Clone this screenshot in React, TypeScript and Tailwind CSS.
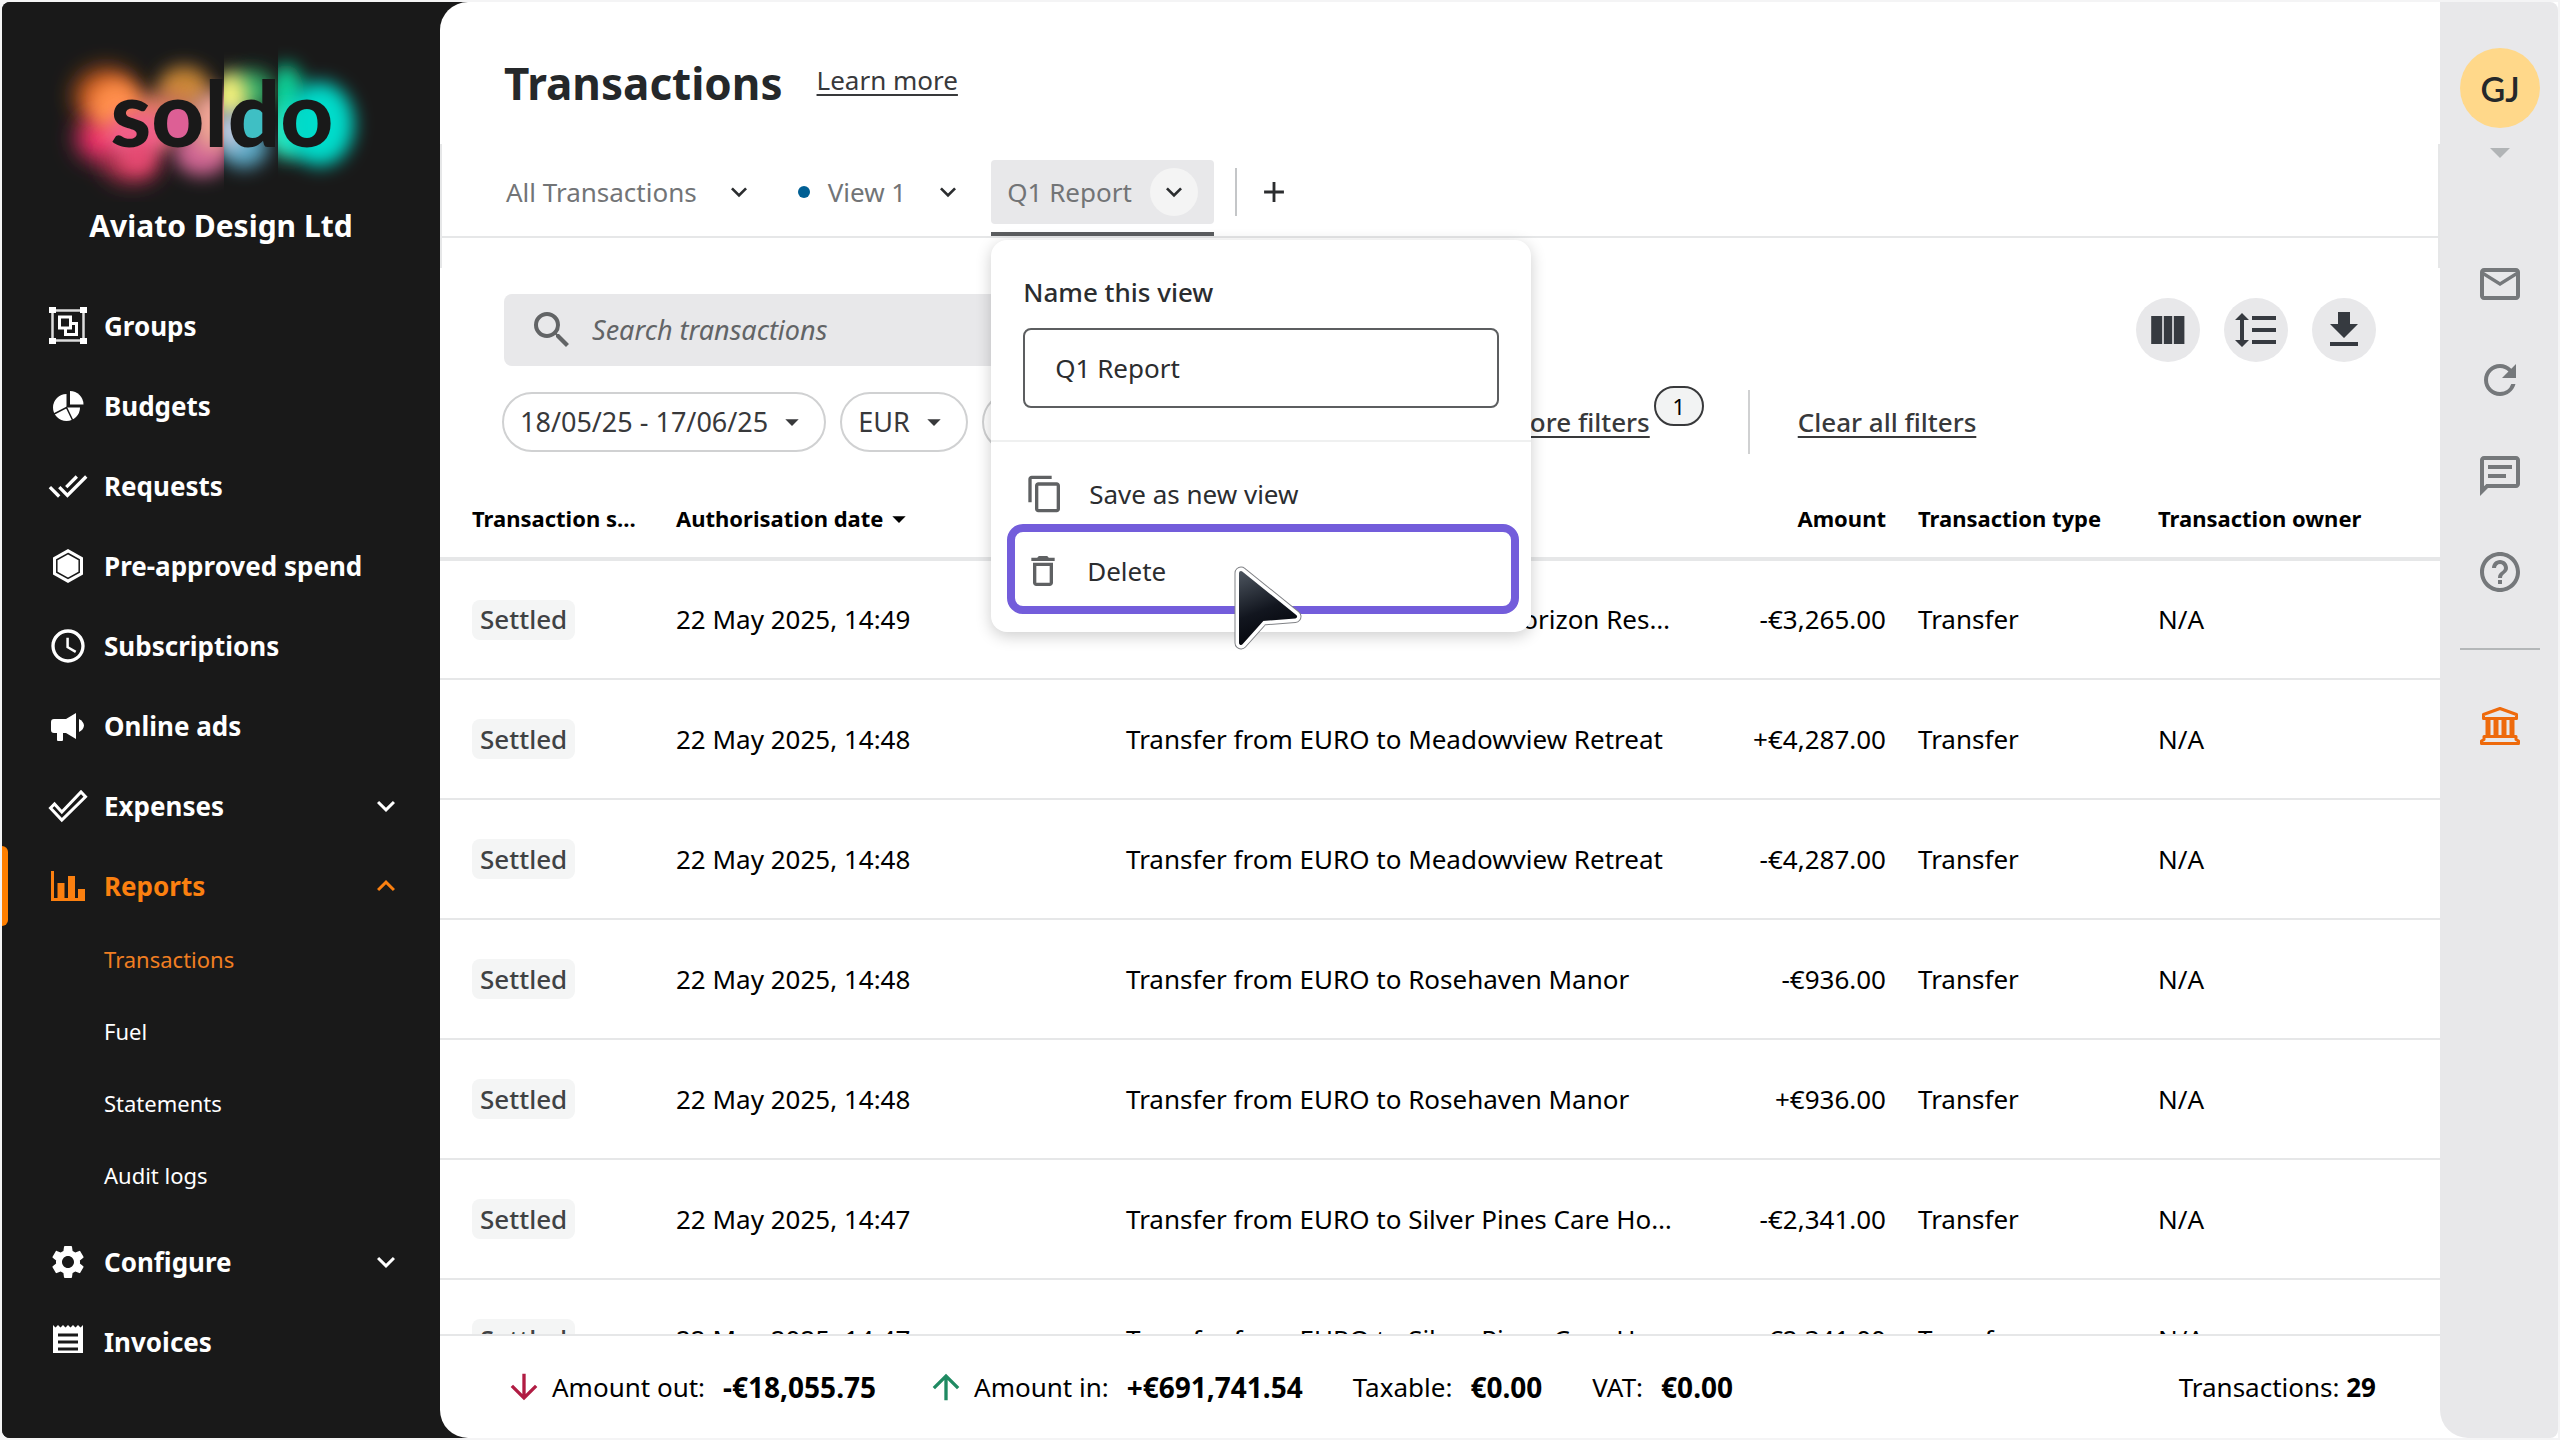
import type { ReactNode } from 'react';
import clsx from 'clsx';
import {
    MdAccessTime,
    MdAdd,
    MdArrowDownward,
    MdArrowDropDown,
    MdArrowUpward,
    MdContentCopy,
    MdDeleteOutline,
    MdDoneAll,
    MdExpandLess,
    MdExpandMore,
    MdHelpOutline,
    MdMailOutline,
    MdRefresh,
    MdSearch,
    MdSettings,
} from 'react-icons/md';

const GroupsIcon = () => (
    <svg viewBox="0 0 40 40" className="size-10" fill="none" stroke="currentColor" strokeWidth="3">
        <rect x="4.5" y="4.5" width="31" height="30" strokeWidth="2.5" opacity="0.85" />
        <path d="M1 1h7v6H1zM32 1h7v6h-7zM1 32h7v6H1zM32 32h7v6h-7z" fill="currentColor" stroke="none" />
        <rect x="11.5" y="11" width="11" height="11" />
        <path d="M22.500 17.500h6v11h-11v-6" />
    </svg>
);

const BudgetsIcon = () => (
    <svg viewBox="0 0 40 40" className="size-10">
        <path d="M18.500 21.500V8A13.500 13.500 0 1 0 32 21.500Z" fill="currentColor" />
        <path d="M22 18.500V5a13.500 13.500 0 0 1 13.500 13.500Z" fill="currentColor" />
        <path d="M5 28.500L18.500 21.500L25 35" fill="none" stroke="#191919" strokeWidth="1.500" />
    </svg>
);

const HexagonIcon = () => (
    <svg viewBox="0 0 40 40" className="size-10">
        <path d="M20 3l15 8.500v17L20 37 5 28.500v-17z" fill="currentColor" />
        <path d="M20 7.500l11.200 6.300v12.400L20 32.500 8.800 26.200V13.800z" fill="none" stroke="#191919" strokeWidth="1.500" />
    </svg>
);

const MegaphoneIcon = () => (
    <svg viewBox="0 0 40 40" className="size-10" fill="currentColor">
        <path d="M6 13h12l10-6v26l-10-6h-3v7a1 1 0 0 1-1 1h-4a1 1 0 0 1-1-1v-7H6a3 3 0 0 1-3-3v-8a3 3 0 0 1 3-3z" />
        <path d="M31 13c3 1.500 5 4 5 6.500s-2 5-5 6.500z" />
    </svg>
);

const CheckOutlineIcon = () => (
    <svg viewBox="0 0 40 40" className="size-10" fill="none" stroke="currentColor" strokeWidth="3">
        <path d="M2.500 22l4-4 7.300 8L33 6l4.500 4.700L13.800 34z" />
    </svg>
);

const ReportsIcon = () => (
    <svg viewBox="0 0 40 40" className="size-10" fill="currentColor">
        <path d="M3 5h3v27h3.500V17h7v15H20V10h7v22h3v-9h7v12H3z" />
    </svg>
);

const InvoiceIcon = () => (
    <svg viewBox="0 0 40 40" className="size-10">
        <path d="M5 3l2.500 2.500L10 3l2.500 2.500L15 3l2.500 2.500L20 3l2.500 2.500L25 3l2.500 2.500L30 3l2.500 2.500L35 3v28H5z" fill="currentColor" />
        <path d="M10 13h20M10 20h20M10 27h20" stroke="#191919" strokeWidth="3" />
    </svg>
);

const BankIcon = () => (
    <svg viewBox="0 0 48 48" className="size-12" fill="none" stroke="currentColor" strokeWidth="3" strokeLinejoin="round">
        <path d="M24 6.500l16.500 6V16.500h-33v-4z" />
        <path d="M12 17v17M20 17v17M28 17v17M36 17v17" strokeWidth="5" />
        <path d="M8 34.500h32v3l2.500 1.500v2.500h-37V39l2.500-1.500z" />
    </svg>
);

const ChatIcon = () => (
    <svg viewBox="0 0 24 24" className="size-12" fill="currentColor">
        <path d="M20 2H4c-1.100 0-2 .9-2 2v18l4-4h14c1.100 0 2-.9 2-2V4c0-1.100-.9-2-2-2zm0 14H5.170L4 17.170V4h16v12z" />
        <path d="M6 6.500h12v2H6zM6 11h9v2H6z" />
    </svg>
);

const Logo = () => (
    <svg viewBox="2 40 438 160" className="h-40 w-full" role="img" aria-label="soldo">
        <defs>
            <filter id="glow" x="-80%" y="-80%" width="260%" height="260%">
                <feGaussianBlur stdDeviation="11" />
            </filter>
            <filter id="glow-sm" x="-80%" y="-80%" width="260%" height="260%">
                <feGaussianBlur stdDeviation="9" />
            </filter>
            <clipPath id="left"><path d="M0 0h224v240H0z" /></clipPath>
            <clipPath id="mid"><path d="M224 0h54v240h-54z" /></clipPath>
            <clipPath id="right"><path d="M278 0h150v240H278z" /></clipPath>
        </defs>
        <g clipPath="url(#left)">
            <ellipse cx="106" cy="94" rx="32" ry="28" fill="#c85a1e" filter="url(#glow)" />
            <ellipse cx="104" cy="136" rx="28" ry="24" fill="#f0306a" filter="url(#glow)" />
            <ellipse cx="132" cy="160" rx="28" ry="20" fill="#c83858" filter="url(#glow)" />
            <ellipse cx="184" cy="86" rx="26" ry="22" fill="#c98636" filter="url(#glow-sm)" />
            <ellipse cx="162" cy="116" rx="36" ry="26" fill="#d97b5e" filter="url(#glow-sm)" />
            <ellipse cx="116" cy="104" rx="26" ry="26" fill="#ff8f4c" filter="url(#glow-sm)" />
            <ellipse cx="138" cy="132" rx="32" ry="24" fill="#f2608a" filter="url(#glow-sm)" />
            <ellipse cx="138" cy="154" rx="14" ry="16" fill="#e84a72" filter="url(#glow-sm)" />
            <ellipse cx="202" cy="150" rx="28" ry="24" fill="#cf6593" filter="url(#glow-sm)" />
            <ellipse cx="214" cy="118" rx="24" ry="30" fill="#f2a596" filter="url(#glow-sm)" />
            <circle cx="180" cy="122" r="17" fill="#dd5f95" />
        </g>
        <g clipPath="url(#mid)">
            <ellipse cx="252" cy="88" rx="22" ry="20" fill="#2fa866" filter="url(#glow-sm)" />
            <ellipse cx="230" cy="94" rx="18" ry="24" fill="#f3f27c" filter="url(#glow-sm)" />
            <ellipse cx="244" cy="144" rx="24" ry="22" fill="#5aa7c4" filter="url(#glow-sm)" />
            <ellipse cx="230" cy="128" rx="16" ry="20" fill="#c3cfe6" filter="url(#glow-sm)" />
            <circle cx="256" cy="122" r="17" fill="#3fbfc4" />
        </g>
        <g clipPath="url(#right)">
            <ellipse cx="286" cy="94" rx="18" ry="32" fill="#0fce94" filter="url(#glow-sm)" />
            <ellipse cx="288" cy="130" rx="24" ry="26" fill="#2fe8bc" filter="url(#glow-sm)" />
            <ellipse cx="320" cy="122" rx="34" ry="42" fill="#00dccb" filter="url(#glow-sm)" />
        </g>
        <text x="222" y="145" textAnchor="middle" fontFamily="Lato, sans-serif" fontSize="92" fontWeight="900" fill="#191919">soldo</text>
    </svg>
);

const Cursor = () => (
    <svg viewBox="0 0 74 90" className="pointer-events-none absolute left-60 top-[322px] z-10 h-[90px] w-[74px]" strokeLinejoin="round">
        <defs>
            <linearGradient id="arrow" x1="0" y1="0" x2="0.3" y2="1">
                <stop offset="0" stopColor="#4a525c" />
                <stop offset="0.6" stopColor="#12161f" />
                <stop offset="1" stopColor="#05070d" />
            </linearGradient>
        </defs>
        <path d="M10 11L64 54.500 31.500 57 10 81z" fill="#808286" stroke="#808286" strokeWidth="13" />
        <path d="M10 11L64 54.500 31.500 57 10 81z" fill="#fff" stroke="#fff" strokeWidth="11" />
        <path d="M10 11L64 54.500 31.500 57 10 81z" fill="url(#arrow)" stroke="url(#arrow)" strokeWidth="4" />
    </svg>
);

const mainLinks = [
    { label: 'Groups', icon: <GroupsIcon /> },
    { label: 'Budgets', icon: <BudgetsIcon /> },
    { label: 'Requests', icon: <MdDoneAll size={40} /> },
    { label: 'Pre-approved spend', icon: <HexagonIcon /> },
    { label: 'Subscriptions', icon: <MdAccessTime size={40} /> },
    { label: 'Online ads', icon: <MegaphoneIcon /> },
];

const reportLinks = ['Transactions', 'Fuel', 'Statements', 'Audit logs'];

const transactions = [
    { date: '22 May 2025, 14:49', description: 'Transfer from EURO to Golden Horizon Residence', amount: '-€3,265.00' },
    { date: '22 May 2025, 14:48', description: 'Transfer from EURO to Meadowview Retreat', amount: '+€4,287.00' },
    { date: '22 May 2025, 14:48', description: 'Transfer from EURO to Meadowview Retreat', amount: '-€4,287.00' },
    { date: '22 May 2025, 14:48', description: 'Transfer from EURO to Rosehaven Manor', amount: '-€936.00' },
    { date: '22 May 2025, 14:48', description: 'Transfer from EURO to Rosehaven Manor', amount: '+€936.00' },
    { date: '22 May 2025, 14:47', description: 'Transfer from EURO to Silver Pines Care Home', amount: '-€2,341.00' },
    { date: '22 May 2025, 14:47', description: 'Transfer from EURO to Silver Pines Care Home', amount: '-€2,341.00' },
];

const rowStyle = 'flex h-20 w-full items-center gap-4 pl-[46px] pr-9 text-[26px] font-bold';

const NavLink = ({ icon, label }: { icon: ReactNode; label: string }) => (
    <a href="#" className={rowStyle}>
        {icon}
        <span>{label}</span>
    </a>
);

const NavGroup = ({ icon, label, open }: { icon: ReactNode; label: string; open?: boolean }) => (
    <button type="button" aria-expanded={!!open} className={clsx(rowStyle, open && 'relative text-[#fb8010]')}>
        {open && <span className="absolute inset-y-0 left-0 w-1.5 rounded-r-md bg-[#ff7f00]" />}
        {icon}
        <span className="flex-1 text-left">{label}</span>
        {open ? <MdExpandLess size={36} /> : <MdExpandMore size={36} />}
    </button>
);

const Sidebar = () => (
    <aside className="flex w-[438px] shrink-0 flex-col rounded-l-lg bg-[#191919] text-white">
        <div className="flex h-[284px] flex-col items-center gap-1 pt-10">
            <Logo />
            <p className="text-[30px] leading-10 font-bold">Aviato Design Ltd</p>
        </div>
        <nav>
            {mainLinks.map((link) => <NavLink key={link.label} {...link} />)}
            <NavGroup icon={<CheckOutlineIcon />} label="Expenses" />
            <NavGroup icon={<ReportsIcon />} label="Reports" open />
            <ul className="pb-2">
                {reportLinks.map((label) => (
                    <li key={label}>
                        <a
                            href="#"
                            className={clsx('flex h-[72px] items-center pb-1.5 pl-[102px] text-[22px]', label === 'Transactions' && 'text-[#f07e22]')}
                        >
                            {label}
                        </a>
                    </li>
                ))}
            </ul>
            <NavGroup icon={<MdSettings size={40} />} label="Configure" />
            <NavLink icon={<InvoiceIcon />} label="Invoices" />
        </nav>
    </aside>
);

const ViewMenu = () => (
    <div className="absolute left-0 top-20 z-20 w-[540px] rounded-2xl bg-white pb-[18px] text-[#2b2d2f] shadow-[0_4px_16px_rgba(0,0,0,0.2)]">
        <div className="border-b-2 border-[#eff0f0] px-8 pb-8 pt-8">
            <label htmlFor="view-name" className="mb-4 block h-10 text-[26px] leading-10 font-medium">Name this view</label>
            <input
                id="view-name"
                type="text"
                defaultValue="Q1 Report"
                className="h-20 w-full rounded-lg border-2 border-[#5c5e60] bg-white px-[30px] text-[26px] outline-none"
            />
        </div>
        <button type="button" className="mt-[22px] flex h-[60px] w-full items-center gap-6 px-[34px] text-[26px]">
            <MdContentCopy size={40} className="text-[#5f6163]" />
            Save as new view
        </button>
        <div className="px-4">
            <button type="button" className="flex h-[90px] w-[512px] items-center gap-6 rounded-2xl border-8 border-[#735ddb] px-2 pt-1 text-[26px]">
                <MdDeleteOutline size={40} className="text-[#5f6163]" />
                Delete
            </button>
        </div>
        <Cursor />
    </div>
);

const ViewTab = ({ label, marked, active }: { label: string; marked?: boolean; active?: boolean }) => (
    <div className={clsx('relative flex h-16 items-center gap-[18px] rounded px-4', active && 'bg-[#e8e8ea]')}>
        {marked && <span className="size-3 rounded-full bg-[#005f94]" />}
        <button type="button" className="text-[26px] text-[#727476]">{label}</button>
        <button
            type="button"
            aria-label={`${label} options`}
            className={clsx('grid size-12 place-items-center rounded-full text-[#2b2d2f]', active && 'bg-[#f4f4f4]')}
        >
            <MdExpandMore size={32} />
        </button>
        {active && (
            <>
                <span className="absolute inset-x-0 -bottom-3 h-1 bg-[#5c5e60]" />
                <ViewMenu />
            </>
        )}
    </div>
);

const Chip = ({ label, className }: { label: string; className?: string }) => (
    <button
        type="button"
        className={clsx('flex h-[60px] items-center gap-2 rounded-full border-2 border-[#d0d1d2] px-4 text-[27px] whitespace-nowrap text-[#38393b]', className)}
    >
        <span className="flex-1 text-left">{label}</span>
        <MdArrowDropDown size={32} />
    </button>
);

const RoundButton = ({ label, path }: { label: string; path: string }) => (
    <button type="button" aria-label={label} className="grid size-16 place-items-center rounded-full bg-[#e8e8ea] text-[#363a40]">
        <svg viewBox="0 0 24 24" className="size-12" fill="currentColor"><path d={path} /></svg>
    </button>
);

const Toolbar = () => (
    <div className="h-[212px]">
        <div className="flex items-center justify-between pl-16 pr-16 pt-[26px]">
            <label className="flex h-[72px] w-[760px] items-center gap-4 rounded-lg bg-[#e8e8ea] px-6 text-[#626466]">
                <MdSearch size={48} />
                <input
                    type="search"
                    aria-label="Search transactions"
                    placeholder="Search transactions"
                    className="flex-1 bg-transparent text-[27px] italic outline-none placeholder:text-[#626466]"
                />
            </label>
            <div className="flex gap-6">
                <RoundButton label="Columns" path="M9.900 19h4.200V5H9.900v14zM3.600 19h5.500V5H3.600v14zM14.900 5v14h5.300V5h-5.300z" />
                <RoundButton label="Row height" path="M6 7h2.500L5 3.500 1.500 7H4v10H1.500L5 20.500 8.500 17H6V7zm4-2v2h12V5H10zm0 14h12v-2H10v2zm0-6h12v-2H10v2z" />
                <RoundButton label="Download" path="M19 9h-4V3H9v6H5l7 7 7-7zM5 18v2h14v-2H5z" />
            </div>
        </div>
        <div className="mt-6 flex h-16 items-center pl-[62px]">
            <div className="flex w-[1004px] gap-3.5">
                <Chip label="18/05/25 - 17/06/25" />
                <Chip label="EUR" />
                <Chip label="" className="flex-1" />
            </div>
            <a href="#" className="text-[26px] font-medium text-[#38393b] underline decoration-2 underline-offset-4">More filters</a>
            <span className="mb-8 ml-1 grid h-10 w-[50px] place-items-center rounded-full border-2 border-[#38393b] bg-[#f2f3f3] text-[22px]">1</span>
            <span className="ml-11 h-16 w-0.5 bg-[#d0d1d2]" />
            <a href="#" className="ml-12 text-[26px] font-medium text-[#38393b] underline decoration-2 underline-offset-4">Clear all filters</a>
        </div>
    </div>
);

const TransactionTable = () => (
    <table className="w-full table-fixed border-collapse text-left">
        <colgroup>
            <col className="w-[220px]" />
            <col className="w-[450px]" />
            <col className="w-[584px]" />
            <col className="w-[208px]" />
            <col className="w-[240px]" />
            <col />
        </colgroup>
        <thead>
            <tr className="h-[79px] border-b-4 border-[#e6e7e8] text-[22px] font-bold">
                <th className="truncate pl-8 pr-5">Transaction status</th>
                <th className="px-4" aria-sort="descending">
                    <button type="button" className="flex items-center">
                        Authorisation date <MdArrowDropDown size={32} />
                    </button>
                </th>
                {/* the open view menu sits over this column's heading */}
                <th className="px-4" aria-label="Description" />
                <th className="px-4 text-right">Amount</th>
                <th className="px-4">Transaction type</th>
                <th className="px-4">Transaction owner</th>
            </tr>
        </thead>
        <tbody>
            {transactions.map((row, i) => (
                <tr key={i} className="h-[120px] border-b-2 border-[#e6e7e8] text-[26px]">
                    <td className="pl-8">
                        <span className="inline-flex h-10 items-center rounded-lg bg-[#f4f5f5] px-2 font-medium text-[#404244]">Settled</span>
                    </td>
                    <td className="px-4">{row.date}</td>
                    <td className="truncate pl-4 pr-5">{row.description}</td>
                    <td className="px-4 text-right">{row.amount}</td>
                    <td className="px-4">Transfer</td>
                    <td className="px-4">N/A</td>
                </tr>
            ))}
        </tbody>
    </table>
);

const Total = ({ label, value, icon }: { label: string; value: string; icon?: ReactNode }) => (
    <div className="flex items-center">
        {icon}
        <span className="mr-[18px] text-[26px]">{label}</span>
        <strong className="text-[28px] font-bold">{value}</strong>
    </div>
);

const Footer = () => (
    <footer className="flex h-[104px] shrink-0 items-center justify-between border-t-2 border-[#e6e7e8] px-16">
        <div className="flex gap-[50px]">
            <Total label="Amount out:" value="-€18,055.75" icon={<MdArrowDownward size={40} className="mr-2 text-[#b11c43]" />} />
            <Total label="Amount in:" value="+€691,741.54" icon={<MdArrowUpward size={40} className="mr-2 text-[#1f8a62]" />} />
            <Total label="Taxable:" value="€0.00" />
            <Total label="VAT:" value="€0.00" />
        </div>
        <p className="text-[26px]">Transactions: <strong className="font-bold">29</strong></p>
    </footer>
);

const railButtons = [
    { label: 'Messages', icon: <MdMailOutline size={48} /> },
    { label: 'Refresh', icon: <MdRefresh size={48} /> },
    { label: 'Chat', icon: <ChatIcon /> },
    { label: 'Help', icon: <MdHelpOutline size={48} /> },
];

const RightRail = () => (
    <aside className="flex w-[118px] shrink-0 flex-col items-center rounded-r-lg rounded-bl-[28px] bg-[#e8e8ea] pl-0.5 pt-[46px] text-[#75787b]">
        <button type="button" className="flex flex-col items-center">
            <span className="grid size-20 place-items-center rounded-full bg-[#ffd88a] font-['Lato'] text-[34px] font-semibold text-[#25282a]">GJ</span>
            <MdArrowDropDown size={48} className="text-[#b1b4b6]" />
        </button>
        <div className="mt-[84px] flex flex-col gap-12">
            {railButtons.map(({ label, icon }) => (
                <button key={label} type="button" aria-label={label}>{icon}</button>
            ))}
        </div>
        <hr className="mt-[52px] w-20 border-t-2 border-[#b4b7b9]" />
        <button type="button" aria-label="Bank accounts" className="mt-[52px] text-[#ee6a0c]"><BankIcon /></button>
    </aside>
);

export default function App() {
    return (
        <div className="flex h-screen bg-[#f4f4f5] p-0.5 font-['Noto_Sans','Liberation_Sans',sans-serif] text-black">
            <div className="flex min-w-0 flex-1 rounded-l-lg bg-[#191919]">
                <Sidebar />
                <main className="flex min-w-0 flex-1 flex-col rounded-l-[28px] bg-white">
                    <header className="flex h-[142px] shrink-0 items-center gap-[34px] px-16 pt-5">
                        <h1 className="text-[44px] leading-none font-bold text-[#25282a]">Transactions</h1>
                        <a href="#" className="mb-1.5 text-[26px] text-[#38393b] underline decoration-2 underline-offset-4">Learn more</a>
                    </header>
                    <div className="h-[124px] shrink-0 border-x-2 border-[#e6e7e8]">
                        <div className="flex gap-[3px] border-b-2 border-[#e6e7e8] px-12 pb-3 pt-4">
                            <ViewTab label="All Transactions" />
                            <ViewTab label="View 1" marked />
                            <ViewTab label="Q1 Report" active />
                            <div className="ml-[18px] flex items-center gap-5">
                                <span className="h-12 w-0.5 bg-[#c4c6c8]" />
                                <button type="button" aria-label="Add view" className="text-[#2b2d2f]"><MdAdd size={34} /></button>
                            </div>
                        </div>
                    </div>
                    <Toolbar />
                    <div className="min-h-0 flex-1 overflow-hidden"><TransactionTable /></div>
                    <Footer />
                </main>
            </div>
            <div className="flex bg-white">
                <RightRail />
            </div>
        </div>
    );
}
